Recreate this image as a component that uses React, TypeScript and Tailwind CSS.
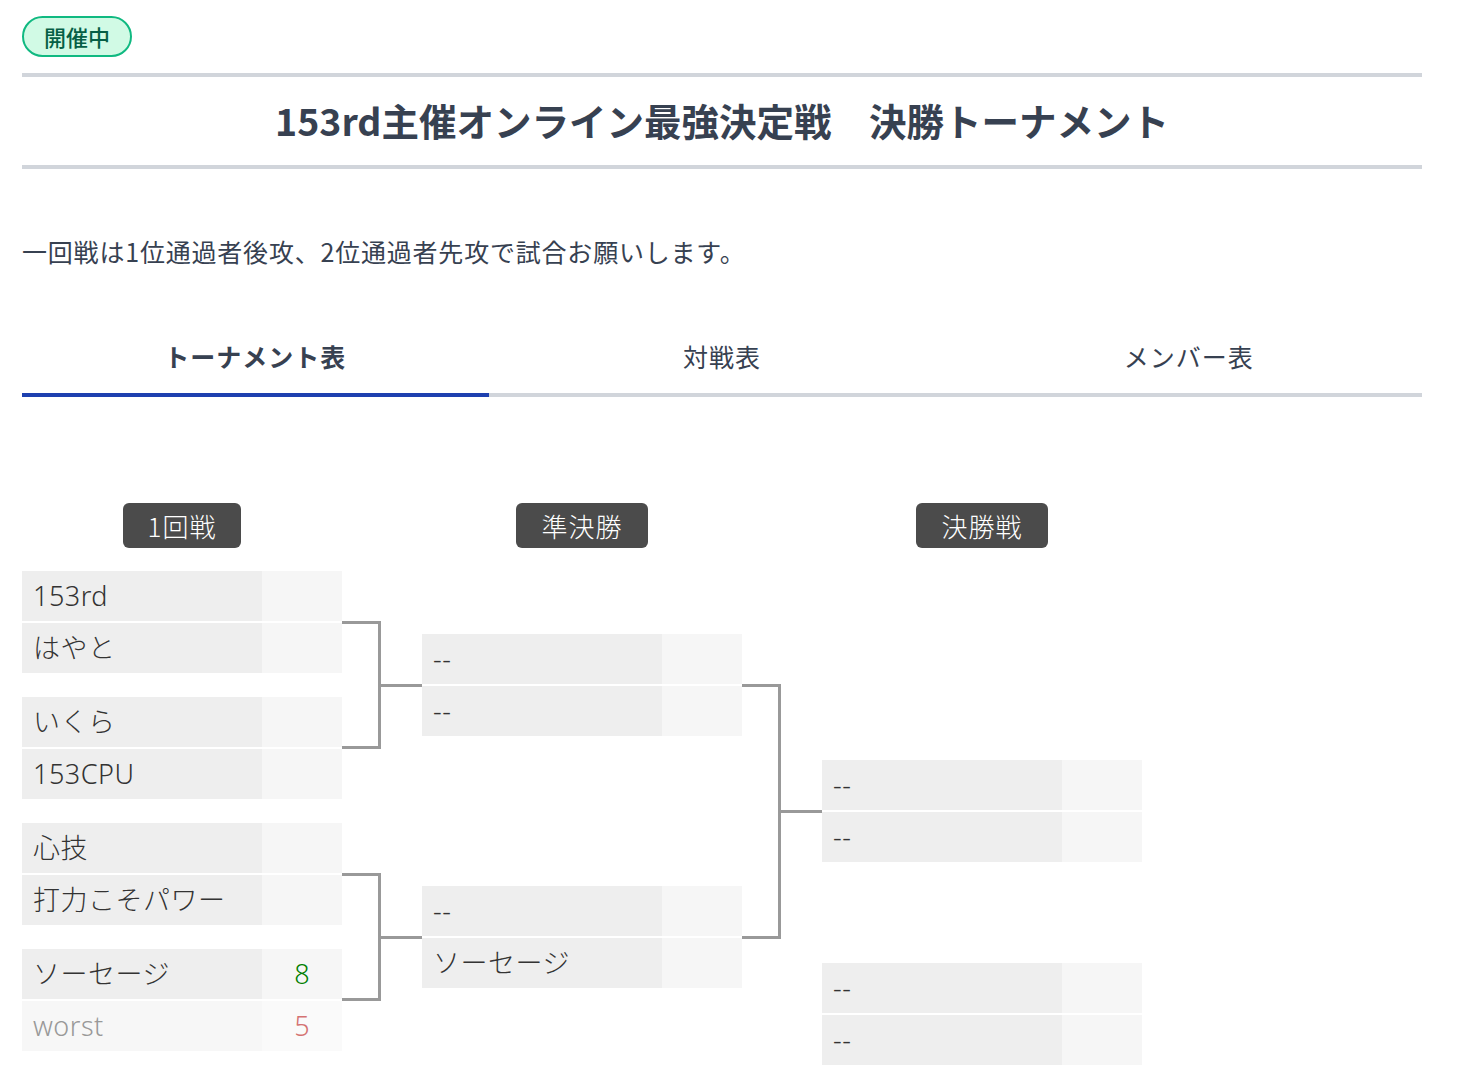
type Entry = { name: string; score?: number; result?: "win" | "lose" };
type MatchData = [Entry, Entry];

const dash: Entry = { name: "--" };

const round1: MatchData[] = [
  [{ name: "153rd" }, { name: "はやと" }],
  [{ name: "いくら" }, { name: "153CPU" }],
  [{ name: "心技" }, { name: "打力こそパワー" }],
  [
    { name: "ソーセージ", score: 8, result: "win" },
    { name: "worst", score: 5, result: "lose" },
  ],
];

const semis: MatchData[] = [
  [dash, dash],
  [dash, { name: "ソーセージ" }],
];

const finals: MatchData[] = [
  [dash, dash],
  [dash, dash],
];

function Row({ entry }: { entry: Entry }) {
  const lose = entry.result === "lose";
  return (
    <div className="flex h-[50px] font-['Noto_Sans','Noto_Sans_CJK_JP',sans-serif] font-light">
      <div
        className={`flex w-[240px] items-center pl-[11px] text-[27px] tracking-[0.5px] ${
          lose ? "bg-[#f7f7f7] text-[#999999]" : "bg-[#eeeeee] text-[#333333]"
        }`}
      >
        {entry.name}
      </div>
      <div
        className={`flex w-[80px] items-center justify-center text-[27px] ${
          lose ? "bg-[#fafafa] text-[#d47272]" : "bg-[#f6f6f6] text-[#008000]"
        }`}
      >
        {entry.score ?? ""}
      </div>
    </div>
  );
}

function Match({ match }: { match: MatchData }) {
  return (
    <div className="flex flex-col gap-[2px]">
      <Row entry={match[0]} />
      <Row entry={match[1]} />
    </div>
  );
}

function RoundLabel({ label }: { label: string }) {
  return (
    <div className="flex h-[45px] justify-center">
      <span className="flex items-center rounded-[6px] bg-[#4b4b4b] px-[25px] text-[26px] tracking-[1px] text-white font-light">
        {label}
      </span>
    </div>
  );
}

function Connector({ height }: { height: string }) {
  return (
    <div className="flex items-center">
      <div className={`w-[39px] border-y-[3px] border-r-[3px] border-[#999999] ${height}`} />
      <div className="h-[3px] w-[41px] bg-[#999999]" />
    </div>
  );
}

export default function App() {
  return (
    <div className="min-h-screen bg-white font-['Noto_Sans_CJK_JP','Noto_Sans',sans-serif] text-[#374151]">
      <div className="w-[1400px] pl-[22px] pt-[16px] box-content">
        {/* status badge */}
        <span className="inline-flex h-[41px] items-center rounded-full border-2 border-[#10b981] bg-[#d1fae5] px-[20px] text-[22px] font-medium text-[#065f46]">
          開催中
        </span>

        {/* title */}
        <div className="mt-[16px] flex h-[96px] items-center justify-center border-y-4 border-[#d1d5db]">
          <h1 className="text-[37.5px] leading-[48px] font-bold text-[#374151] -mt-[3px]">
            153rd主催オンライン最強決定戦　決勝トーナメント
          </h1>
        </div>

        <p className="mt-[64px] text-[25px] leading-[36px] tracking-[0.8px] text-[#374151]">
          一回戦は1位通過者後攻、2位通過者先攻で試合お願いします。
        </p>

        {/* tabs */}
        <div className="mt-[51px] grid grid-cols-3">
          <div className="flex h-[77px] items-center justify-center border-b-4 border-[#1e40af] text-[25px] tracking-[1px] font-bold">
            トーナメント表
          </div>
          <div className="flex h-[77px] items-center justify-center border-b-4 border-[#d1d5db] text-[25px] tracking-[1px]">
            対戦表
          </div>
          <div className="flex h-[77px] items-center justify-center border-b-4 border-[#d1d5db] text-[25px] tracking-[1px]">
            メンバー表
          </div>
        </div>

        {/* bracket */}
        <div className="mt-[106px] flex pb-[20px]">
          <div className="flex w-[320px] flex-col">
            <RoundLabel label="1回戦" />
            <div className="mt-[23px] flex flex-col gap-[24px]">
              {round1.map((m, i) => (
                <Match key={i} match={m} />
              ))}
            </div>
          </div>

          <div className="flex w-[80px] flex-col gap-[124px] pt-[118px]">
            <Connector height="h-[128px]" />
            <Connector height="h-[128px]" />
          </div>

          <div className="flex w-[320px] flex-col">
            <RoundLabel label="準決勝" />
            <div className="mt-[86px] flex flex-col gap-[150px]">
              {semis.map((m, i) => (
                <Match key={i} match={m} />
              ))}
            </div>
          </div>

          <div className="flex w-[80px] flex-col pt-[181px]">
            <Connector height="h-[255px]" />
          </div>

          <div className="flex w-[320px] flex-col">
            <RoundLabel label="決勝戦" />
            <div className="mt-[212px] flex flex-col gap-[101px]">
              {finals.map((m, i) => (
                <Match key={i} match={m} />
              ))}
            </div>
          </div>
        </div>
      </div>
    </div>
  );
}
